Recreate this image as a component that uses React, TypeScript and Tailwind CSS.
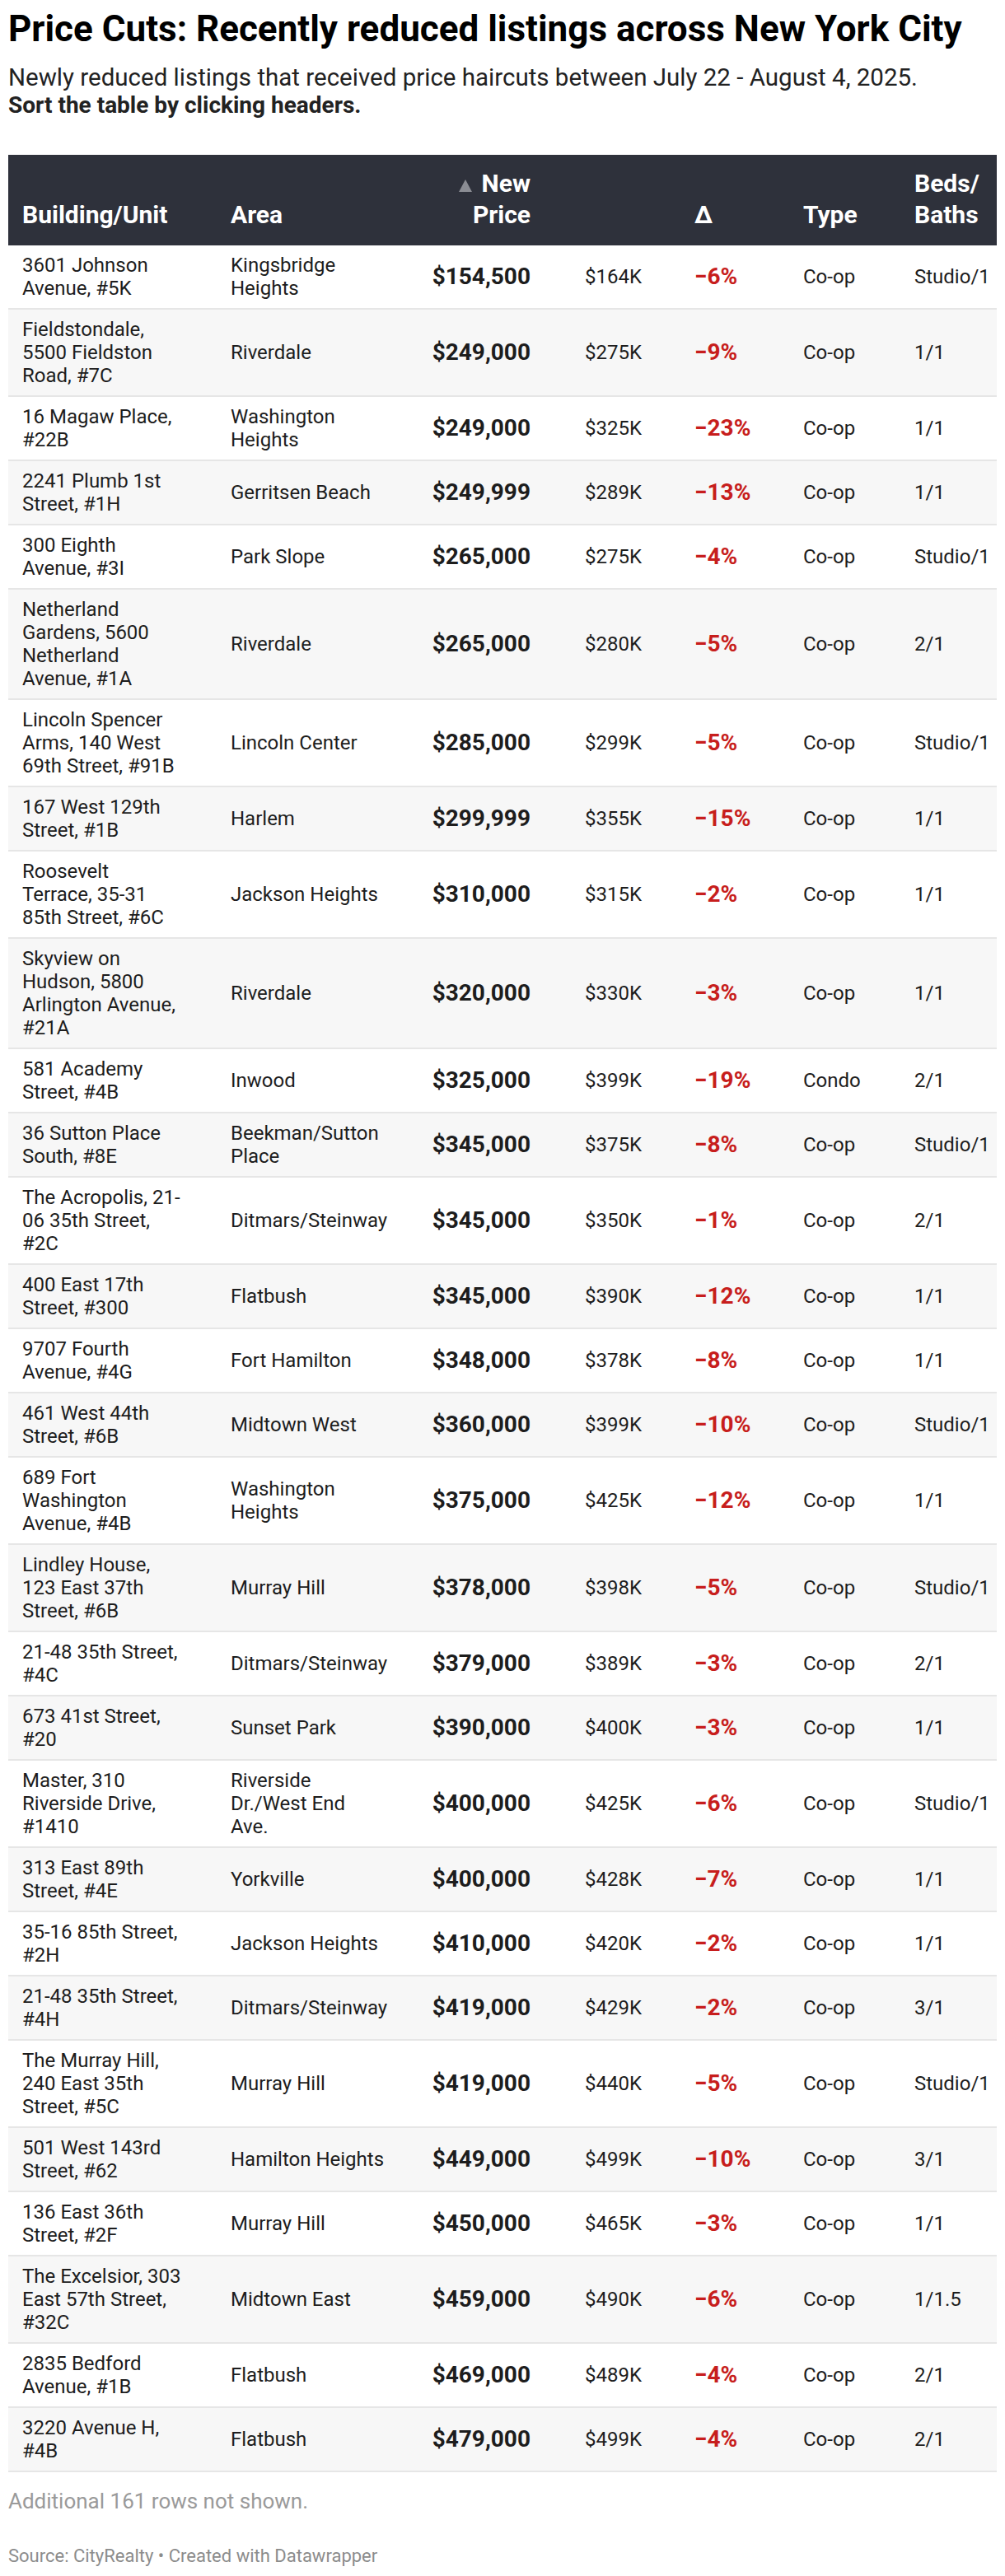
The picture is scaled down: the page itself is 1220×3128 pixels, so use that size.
import React from 'react';

// one listing row of the table
interface Listing {
  building: string;
  area: string;
  price: string;
  was: string;
  delta: string;
  type: string;
  beds: string;
}

// line breaks kept as in the published table
const listings: Listing[] = [
  { building: '3601 Johnson\nAvenue, #5K', area: 'Kingsbridge\nHeights', price: '$154,500', was: '$164K', delta: '−6%', type: 'Co-op', beds: 'Studio/1' },
  { building: 'Fieldstondale,\n5500 Fieldston\nRoad, #7C', area: 'Riverdale', price: '$249,000', was: '$275K', delta: '−9%', type: 'Co-op', beds: '1/1' },
  { building: '16 Magaw Place,\n#22B', area: 'Washington\nHeights', price: '$249,000', was: '$325K', delta: '−23%', type: 'Co-op', beds: '1/1' },
  { building: '2241 Plumb 1st\nStreet, #1H', area: 'Gerritsen Beach', price: '$249,999', was: '$289K', delta: '−13%', type: 'Co-op', beds: '1/1' },
  { building: '300 Eighth\nAvenue, #3I', area: 'Park Slope', price: '$265,000', was: '$275K', delta: '−4%', type: 'Co-op', beds: 'Studio/1' },
  { building: 'Netherland\nGardens, 5600\nNetherland\nAvenue, #1A', area: 'Riverdale', price: '$265,000', was: '$280K', delta: '−5%', type: 'Co-op', beds: '2/1' },
  { building: 'Lincoln Spencer\nArms, 140 West\n69th Street, #91B', area: 'Lincoln Center', price: '$285,000', was: '$299K', delta: '−5%', type: 'Co-op', beds: 'Studio/1' },
  { building: '167 West 129th\nStreet, #1B', area: 'Harlem', price: '$299,999', was: '$355K', delta: '−15%', type: 'Co-op', beds: '1/1' },
  { building: 'Roosevelt\nTerrace, 35-31\n85th Street, #6C', area: 'Jackson Heights', price: '$310,000', was: '$315K', delta: '−2%', type: 'Co-op', beds: '1/1' },
  { building: 'Skyview on\nHudson, 5800\nArlington Avenue,\n#21A', area: 'Riverdale', price: '$320,000', was: '$330K', delta: '−3%', type: 'Co-op', beds: '1/1' },
  { building: '581 Academy\nStreet, #4B', area: 'Inwood', price: '$325,000', was: '$399K', delta: '−19%', type: 'Condo', beds: '2/1' },
  { building: '36 Sutton Place\nSouth, #8E', area: 'Beekman/Sutton\nPlace', price: '$345,000', was: '$375K', delta: '−8%', type: 'Co-op', beds: 'Studio/1' },
  { building: 'The Acropolis, 21-\n06 35th Street,\n#2C', area: 'Ditmars/Steinway', price: '$345,000', was: '$350K', delta: '−1%', type: 'Co-op', beds: '2/1' },
  { building: '400 East 17th\nStreet, #300', area: 'Flatbush', price: '$345,000', was: '$390K', delta: '−12%', type: 'Co-op', beds: '1/1' },
  { building: '9707 Fourth\nAvenue, #4G', area: 'Fort Hamilton', price: '$348,000', was: '$378K', delta: '−8%', type: 'Co-op', beds: '1/1' },
  { building: '461 West 44th\nStreet, #6B', area: 'Midtown West', price: '$360,000', was: '$399K', delta: '−10%', type: 'Co-op', beds: 'Studio/1' },
  { building: '689 Fort\nWashington\nAvenue, #4B', area: 'Washington\nHeights', price: '$375,000', was: '$425K', delta: '−12%', type: 'Co-op', beds: '1/1' },
  { building: 'Lindley House,\n123 East 37th\nStreet, #6B', area: 'Murray Hill', price: '$378,000', was: '$398K', delta: '−5%', type: 'Co-op', beds: 'Studio/1' },
  { building: '21-48 35th Street,\n#4C', area: 'Ditmars/Steinway', price: '$379,000', was: '$389K', delta: '−3%', type: 'Co-op', beds: '2/1' },
  { building: '673 41st Street,\n#20', area: 'Sunset Park', price: '$390,000', was: '$400K', delta: '−3%', type: 'Co-op', beds: '1/1' },
  { building: 'Master, 310\nRiverside Drive,\n#1410', area: 'Riverside\nDr./West End\nAve.', price: '$400,000', was: '$425K', delta: '−6%', type: 'Co-op', beds: 'Studio/1' },
  { building: '313 East 89th\nStreet, #4E', area: 'Yorkville', price: '$400,000', was: '$428K', delta: '−7%', type: 'Co-op', beds: '1/1' },
  { building: '35-16 85th Street,\n#2H', area: 'Jackson Heights', price: '$410,000', was: '$420K', delta: '−2%', type: 'Co-op', beds: '1/1' },
  { building: '21-48 35th Street,\n#4H', area: 'Ditmars/Steinway', price: '$419,000', was: '$429K', delta: '−2%', type: 'Co-op', beds: '3/1' },
  { building: 'The Murray Hill,\n240 East 35th\nStreet, #5C', area: 'Murray Hill', price: '$419,000', was: '$440K', delta: '−5%', type: 'Co-op', beds: 'Studio/1' },
  { building: '501 West 143rd\nStreet, #62', area: 'Hamilton Heights', price: '$449,000', was: '$499K', delta: '−10%', type: 'Co-op', beds: '3/1' },
  { building: '136 East 36th\nStreet, #2F', area: 'Murray Hill', price: '$450,000', was: '$465K', delta: '−3%', type: 'Co-op', beds: '1/1' },
  { building: 'The Excelsior, 303\nEast 57th Street,\n#32C', area: 'Midtown East', price: '$459,000', was: '$490K', delta: '−6%', type: 'Co-op', beds: '1/1.5' },
  { building: '2835 Bedford\nAvenue, #1B', area: 'Flatbush', price: '$469,000', was: '$489K', delta: '−4%', type: 'Co-op', beds: '2/1' },
  { building: '3220 Avenue H,\n#4B', area: 'Flatbush', price: '$479,000', was: '$499K', delta: '−4%', type: 'Co-op', beds: '2/1' },
];

function ListingRow({ item, index }: { item: Listing; index: number }) {
  return (
    <tr className={`border-b-2 border-[#e6e6e6] ${index % 2 === 1 ? 'bg-[#f7f7f7]' : 'bg-white'}`}>
      <td className="pl-[17px] pr-2 py-[10px] align-middle whitespace-pre-line">{item.building}</td>
      <td className="pl-[17px] pr-2 py-[10px] align-middle whitespace-pre-line">{item.area}</td>
      <td className="pr-[50px] py-[10px] align-middle text-right text-[28px] font-bold">{item.price}</td>
      <td className="pl-[16px] py-[10px] align-middle">{item.was}</td>
      <td className="pl-[17px] py-[10px] align-middle text-[28px] font-bold text-[#c71e1d]">{item.delta}</td>
      <td className="pl-[16px] py-[10px] align-middle">{item.type}</td>
      <td className="pl-[17px] py-[10px] align-middle whitespace-nowrap">{item.beds}</td>
    </tr>
  );
}

export default function App() {
  return (
    <div className="w-[1220px] h-[3128px] bg-white px-[10px] pt-[9px] text-[#1d1d1d] font-['Roboto',sans-serif]">
      {/* title and description */}
      <h1 className="text-[44px] leading-[52px] font-bold text-black">
        Price Cuts: Recently reduced listings across New York City
      </h1>
      <div className="mt-[17px] text-[#222]">
        <p className="text-[29.5px] leading-[33px]">
          Newly reduced listings that received price haircuts between July 22 - August 4, 2025.
        </p>
        <p className="text-[28px] leading-[33px] font-bold">Sort the table by clicking headers.</p>
      </div>

      {/* table */}
      <table className="mt-[44px] w-[1200px] table-fixed border-collapse text-[24px] leading-[28px]">
        <colgroup>
          <col className="w-[253px]" />
          <col className="w-[227px]" />
          <col className="w-[204px]" />
          <col className="w-[132px]" />
          <col className="w-[133px]" />
          <col className="w-[134px]" />
          <col className="w-[117px]" />
        </colgroup>
        <thead>
          <tr className="bg-[#2e313b] text-white text-[30px] leading-[38px] font-bold">
            <th className="pl-[17px] pt-[16px] pb-[18px] text-left align-bottom">Building/Unit</th>
            <th className="pl-[17px] pt-[16px] pb-[18px] text-left align-bottom">Area</th>
            <th className="pr-[50px] pt-[16px] pb-[18px] text-right align-bottom">
              <span className="inline-block w-0 h-0 mr-[12px] border-l-[8px] border-r-[8px] border-b-[15px] border-l-transparent border-r-transparent border-b-[#8b8d94]" />
              New
              <br />
              Price
            </th>
            <th className="pt-[16px] pb-[18px]" />
            <th className="pl-[17px] pt-[16px] pb-[18px] text-left align-bottom">Δ</th>
            <th className="pl-[16px] pt-[16px] pb-[18px] text-left align-bottom">Type</th>
            <th className="pl-[17px] pt-[16px] pb-[18px] text-left align-bottom">
              Beds/
              <br />
              Baths
            </th>
          </tr>
        </thead>
        <tbody>
          {listings.map((item, i) => (
            <ListingRow key={i} item={item} index={i} />
          ))}
        </tbody>
      </table>

      {/* notes */}
      <p className="mt-[19px] text-[26px] leading-[32px] text-[#9a9a9a]">Additional 161 rows not shown.</p>
      <p className="mt-[37px] text-[22px] leading-[28px] text-[#8c8c8c]">Source: CityRealty • Created with Datawrapper</p>
    </div>
  );
}
